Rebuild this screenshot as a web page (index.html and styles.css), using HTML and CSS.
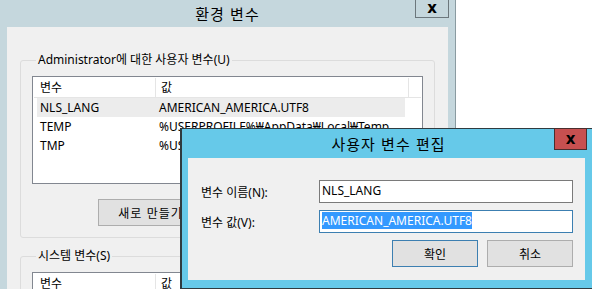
FILE: index.html
```html
<!DOCTYPE html>
<html lang="ko">
	<head>
		<meta charset="UTF-8" />
		<title>환경 변수</title>
		<link rel="stylesheet" href="styles.css">
	</head>
	<body>
		<div class="env-window">
			<div class="title-bar">
				<span class="title">환경 변수</span>
				<button class="close-btn">x</button>
			</div>
			<div class="client">
				<fieldset class="group">
					<legend>Administrator에 대한 사용자 변수(U)</legend>
					<div class="list-box">
						<div class="list-row list-head">
							<div class="col-name">변수</div>
							<div class="col-value">값</div>
							<div class="col-fill"></div>
						</div>
						<div class="list-row item selected">
							<div class="col-name">NLS_LANG</div>
							<div class="col-value">AMERICAN_AMERICA.UTF8</div>
						</div>
						<div class="list-row item">
							<div class="col-name">TEMP</div>
							<div class="col-value">%USERPROFILE%₩AppData₩Local₩Temp</div>
						</div>
						<div class="list-row item">
							<div class="col-name">TMP</div>
							<div class="col-value">%USERPROFILE%₩AppData₩Local₩Temp</div>
						</div>
					</div>
					<div class="group-buttons">
						<button class="btn">새로 만들기(N)...</button>
						<button class="btn">편집(E)...</button>
					</div>
				</fieldset>
				<fieldset class="group">
					<legend>시스템 변수(S)</legend>
					<div class="list-box">
						<div class="list-row list-head">
							<div class="col-name">변수</div>
							<div class="col-value">값</div>
							<div class="col-fill"></div>
						</div>
					</div>
				</fieldset>
			</div>
		</div>

		<div class="edit-dialog">
			<div class="dialog-title-bar">
				<span class="title">사용자 변수 편집</span>
				<button class="close-btn red">x</button>
			</div>
			<div class="dialog-client">
				<div class="field-row">
					<label for="var-name">변수 이름(N):</label>
					<div id="var-name" class="text-box">NLS_LANG</div>
				</div>
				<div class="field-row">
					<label for="var-value">변수 값(V):</label>
					<div id="var-value" class="text-box focused"><span class="sel">AMERICAN_AMERICA.UTF8</span></div>
				</div>
				<div class="dialog-buttons">
					<button class="btn default">확인</button>
					<button class="btn">취소</button>
				</div>
			</div>
		</div>
	</body>
</html>
```

FILE: styles.css
```css
html, body {
	margin: 0;
	padding: 0;
}

body {
	position: relative;
	width: 592px;
	height: 289px;
	overflow: hidden;
	background-color: #ffffff;
	font-family: "Noto Sans", "Noto Sans CJK KR", sans-serif;
	font-size: 12px;
	color: #000000;
}

button {
	font-family: inherit;
	font-size: 12px;
	color: #000000;
	padding: 0;
	margin: 0;
}

/* background window */
.env-window {
	box-sizing: border-box;
	width: 456px;
	height: 289px;
	overflow: hidden;
	background-color: #c5d7dd;
	border-right: 1px solid #8a9ba1;
	padding: 0 7px 0 7px;
}

.title-bar {
	position: relative;
	height: 27px;
	display: flex;
	align-items: center;
	justify-content: center;
}

.title {
	font-family: "Noto Sans CJK KR", sans-serif;
	font-size: 15px;
	line-height: 20px;
	letter-spacing: 1px;
}

.close-btn {
	position: absolute;
	top: -1px;
	right: -1px;
	width: 34px;
	height: 19px;
	border: 1px solid #6c777c;
	background-color: #c5d7dd;
	font-family: "DejaVu Sans", sans-serif;
	font-weight: bold;
	font-size: 15px;
	line-height: 13px;
}

.client {
	height: 262px;
	overflow: hidden;
	background-color: #f0f0f0;
	padding: 25px 13px 0 13px;
}

.group {
	margin: 0 0 10px 0;
	padding: 8px 11px 11px 11px;
	border: 1px solid #dcdcdc;
	border-radius: 3px;
}

.group legend {
	padding: 0 2px;
	margin-left: 4px;
	line-height: 16px;
}

.list-box {
	height: 106px;
	border: 1px solid #828790;
	background-color: #ffffff;
}

.list-row {
	display: flex;
	height: 19px;
	line-height: 19px;
}

.list-head {
	margin: 1px 1px 0 1px;
	border-bottom: 1px solid #e5e5e5;
}

.list-head .col-name {
	width: 115px;
	padding-left: 6px;
	border-right: 1px solid #e5e5e5;
}

.list-head .col-value {
	width: 247px;
	padding-left: 5px;
	border-right: 1px solid #e5e5e5;
}

.item {
	margin-left: 4px;
	width: 368px;
}

.item .col-name {
	width: 116px;
	padding-left: 3px;
}

.item .col-value {
	padding-left: 3px;
	white-space: nowrap;
}

.selected {
	background-color: #ececec;
}

.group-buttons {
	display: flex;
	gap: 8px;
	margin: 15px 0 0 66px;
}

.btn {
	box-sizing: border-box;
	width: 86px;
	height: 27px;
	border: 1px solid #adadad;
	background-color: #e1e1e1;
	font-family: "Noto Sans CJK KR", sans-serif;
}

.group-buttons .btn {
	width: 138px;
	height: 27px;
	letter-spacing: 1px;
}

/* edit dialog, over the background window */
.edit-dialog {
	position: absolute;
	left: 180px;
	top: 128px;
	box-sizing: border-box;
	width: 413px;
	height: 161px;
	background-color: #66c9e9;
	border: 1px solid #2f3b40;
	border-left-width: 2px;
	padding: 0 7px 0 6px;
}

.dialog-title-bar {
	position: relative;
	height: 29px;
	display: flex;
	align-items: center;
	justify-content: center;
}

.dialog-title-bar .title {
	margin-left: 4px;
}

.close-btn.red {
	top: -1px;
	right: -2px;
	width: 33px;
	height: 22px;
	background-color: #c75050;
	border-color: #4a2e2e;
}

.dialog-client {
	height: 122px;
	box-sizing: border-box;
	background-color: #f0f0f0;
	padding: 22px 12px 0 13px;
}

.field-row {
	display: flex;
	align-items: center;
	margin-bottom: 7px;
}

.field-row label {
	width: 118px;
}

.text-box {
	box-sizing: border-box;
	width: 254px;
	height: 23px;
	border: 1px solid #7a7a7a;
	background-color: #ffffff;
	padding-left: 2px;
	line-height: 20px;
	white-space: nowrap;
}

.text-box.focused {
	border-color: #3c7fb1;
}

.sel {
	display: inline-block;
	background-color: #3399ff;
	color: #ffffff;
	line-height: 17px;
	margin-top: 1px;
}

.dialog-buttons {
	display: flex;
	justify-content: flex-end;
	gap: 9px;
	margin-top: 3px;
}

.btn.default {
	border-color: #3c7fb1;
}
```
